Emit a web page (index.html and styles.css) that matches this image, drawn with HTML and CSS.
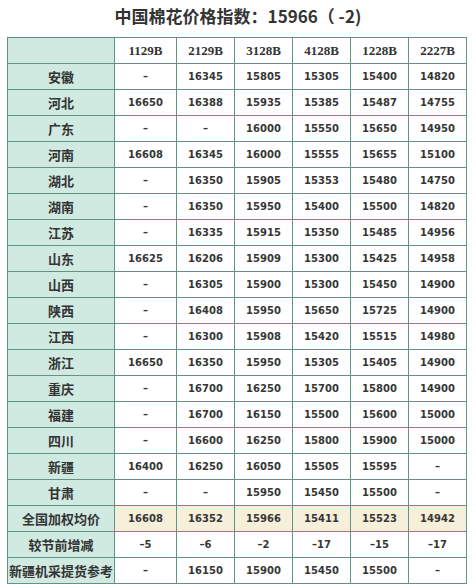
FILE: index.html
```html
<!DOCTYPE html>
<html lang="zh">
<head>
<meta charset="utf-8">
<title>中国棉花价格指数</title>
<link rel="stylesheet" href="styles.css">
</head>
<body>
<h1 class="title">中国棉花价格指数：15966（ -2)</h1>
<table class="grid">
<colgroup>
<col class="c-label"><col class="c-first"><col class="c-num"><col class="c-num"><col class="c-num"><col class="c-num"><col class="c-num">
</colgroup>
<thead>
<tr><th class="label"></th><th class="code">1129B</th><th class="code">2129B</th><th class="code">3128B</th><th class="code">4128B</th><th class="code">1228B</th><th class="code">2227B</th></tr>
</thead>
<tbody>
<tr><th class="label">安徽</th><td>–</td><td>16345</td><td>15805</td><td>15305</td><td>15400</td><td>14820</td></tr>
<tr><th class="label">河北</th><td>16650</td><td>16388</td><td>15935</td><td>15385</td><td>15487</td><td>14755</td></tr>
<tr><th class="label">广东</th><td>–</td><td>–</td><td>16000</td><td>15550</td><td>15650</td><td>14950</td></tr>
<tr><th class="label">河南</th><td>16608</td><td>16345</td><td>16000</td><td>15555</td><td>15655</td><td>15100</td></tr>
<tr><th class="label">湖北</th><td>–</td><td>16350</td><td>15905</td><td>15353</td><td>15480</td><td>14750</td></tr>
<tr><th class="label">湖南</th><td>–</td><td>16350</td><td>15950</td><td>15400</td><td>15500</td><td>14820</td></tr>
<tr><th class="label">江苏</th><td>–</td><td>16335</td><td>15915</td><td>15350</td><td>15485</td><td>14956</td></tr>
<tr><th class="label">山东</th><td>16625</td><td>16206</td><td>15909</td><td>15300</td><td>15425</td><td>14958</td></tr>
<tr><th class="label">山西</th><td>–</td><td>16305</td><td>15900</td><td>15300</td><td>15450</td><td>14900</td></tr>
<tr><th class="label">陕西</th><td>–</td><td>16408</td><td>15950</td><td>15650</td><td>15725</td><td>14900</td></tr>
<tr><th class="label">江西</th><td>–</td><td>16300</td><td>15908</td><td>15420</td><td>15515</td><td>14980</td></tr>
<tr><th class="label">浙江</th><td>16650</td><td>16350</td><td>15950</td><td>15305</td><td>15405</td><td>14900</td></tr>
<tr><th class="label">重庆</th><td>–</td><td>16700</td><td>16250</td><td>15700</td><td>15800</td><td>14900</td></tr>
<tr><th class="label">福建</th><td>–</td><td>16700</td><td>16150</td><td>15500</td><td>15600</td><td>15000</td></tr>
<tr><th class="label">四川</th><td>–</td><td>16600</td><td>16250</td><td>15800</td><td>15900</td><td>15000</td></tr>
<tr><th class="label">新疆</th><td>16400</td><td>16250</td><td>16050</td><td>15505</td><td>15595</td><td>–</td></tr>
<tr><th class="label">甘肃</th><td>–</td><td>–</td><td>15950</td><td>15450</td><td>15500</td><td>–</td></tr>
<tr class="avg"><th class="label">全国加权均价</th><td>16608</td><td>16352</td><td>15966</td><td>15411</td><td>15523</td><td>14942</td></tr>
<tr><th class="label">较节前增减</th><td>–5</td><td>–6</td><td>–2</td><td>–17</td><td>–15</td><td>–17</td></tr>
<tr><th class="label">新疆机采提货参考</th><td>–</td><td>16150</td><td>15900</td><td>15450</td><td>15500</td><td>–</td></tr>
</tbody>
</table>
</body>
</html>
```
FILE: styles.css
```css
html, body {
  margin: 0;
  padding: 0;
  background: #ffffff;
}
body {
  width: 476px;
  color: #333333;
  font-family: "Noto Sans CJK SC", "Noto Sans", sans-serif;
}
.title {
  margin: 0 0 6px 0;
  height: 31px;
  line-height: 31px;
  font-size: 17px;
  font-weight: bold;
  text-align: center;
  color: #333333;
}
.grid {
  margin-left: 7px;
  border-collapse: collapse;
  table-layout: fixed;
  width: 460px;
}
.c-label { width: 107px; }
.c-first { width: 62px; }
.c-num { width: 58px; }
.grid tr { height: 26px; }
.grid th, .grid td {
  border: 1px solid #5a9585;
  padding: 0;
  text-align: center;
  vertical-align: middle;
  white-space: nowrap;
  overflow: hidden;
}
.grid td {
  font-family: "DejaVu Sans", Verdana, sans-serif;
  font-weight: bold;
  font-size: 10px;
  color: #363636;
}
.grid th.label {
  background: #d0eae1;
  font-family: "Noto Sans CJK SC", sans-serif;
  font-size: 13px;
  font-weight: bold;
  color: #333333;
}
.grid th.code {
  background: #ffffff;
  font-family: "Liberation Serif", "Times New Roman", serif;
  font-size: 13px;
  font-weight: bold;
  color: #333333;
}
.grid tr.avg td {
  background: #f6efd9;
}
```
